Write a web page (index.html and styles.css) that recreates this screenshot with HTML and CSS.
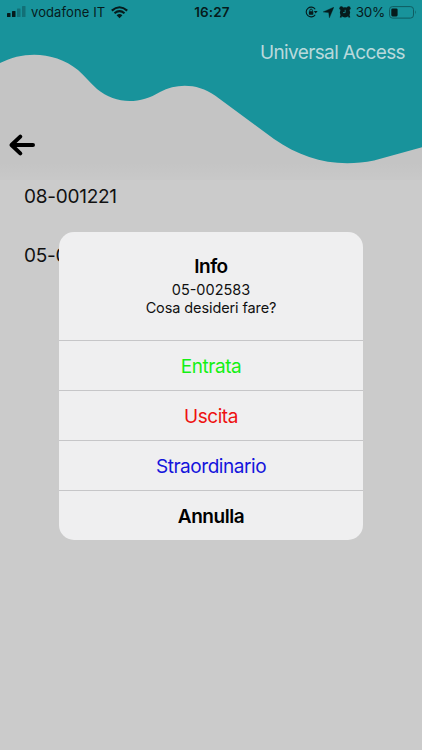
FILE: index.html
```html
<!DOCTYPE html>
<html lang="it">
<head>
  <meta charset="UTF-8">
  <meta name="viewport" content="width=device-width, initial-scale=1.0">
  <title>Universal Access</title>
  <link rel="stylesheet" href="styles.css">
</head>
<body>
  <header class="header">
    <svg class="wave" viewBox="0 0 422 180" aria-hidden="true">
      <path d="M0 0H422V147.300L374 160.500C337 168 304 160 274 139L215 95.500C198 83.500 177 83 160 92C139 105 115 104 97 89C90 83 85 76 78 70C56 52 25 50 0 63Z"/>
    </svg>

    <div class="status-bar">
      <div class="status-left">
        <svg class="signal" width="19" height="13" viewBox="0 0 19 13">
          <rect x="0" y="8" width="3.500" height="4" rx=".6"/>
          <rect x="5" y="6" width="3.500" height="6" rx=".6"/>
          <rect class="dim" x="10" y="3.500" width="3.500" height="8.500" rx=".6"/>
          <rect class="dim" x="15" y="1" width="3.500" height="11" rx=".6"/>
        </svg>
        <span class="carrier">vodafone IT</span>
        <svg class="wifi" width="17" height="13" viewBox="0 0 17 13">
          <path d="M.8 4.600Q8.500 -2.100 16.200 4.600M3.500 7.300Q8.500 3.100 13.500 7.300" fill="none" stroke="#061b1c" stroke-width="2.100"/>
          <path d="M5.600 9.200Q8.500 6.800 11.400 9.200L8.500 12.200Z"/>
        </svg>
      </div>
      <span class="clock">16:27</span>
      <div class="status-right">
        <svg width="13" height="12" viewBox="0 0 13 12">
          <path d="M10.200 3.300A4.900 4.900 0 1 0 10.200 8.700" fill="none" stroke="#061b1c" stroke-width="1.100"/>
          <path d="M8.800 5H12.600L10.700 7.600Z"/>
          <rect x="3.900" y="5.300" width="4.400" height="3.400" rx=".4"/>
          <path d="M4.800 5.500V4.400A1.300 1.300 0 0 1 7.400 4.400V5.500" fill="none" stroke="#061b1c" stroke-width=".9"/>
        </svg>
        <svg width="11" height="11" viewBox="0 0 11 11">
          <path d="M10.800 .2L6.400 10.800L5.700 5.500L.2 4.900Z" stroke="#061b1c" stroke-width=".4"/>
        </svg>
        <svg width="12" height="12" viewBox="0 0 12 12">
          <circle cx="6" cy="6.400" r="5.100"/>
          <circle cx="2.300" cy="2.200" r="1.900"/>
          <circle cx="9.700" cy="2.200" r="1.900"/>
          <path d="M2.500 9L1.500 11.500M9.500 9L10.500 11.500" stroke="#061b1c" stroke-width="1.700"/>
          <path d="M6.200 3.800V6.600H4" fill="none" stroke="#18939b" stroke-width=".8"/>
        </svg>
        <span class="percent">30%</span>
        <svg class="battery" width="28" height="13" viewBox="0 0 28 13">
          <rect x=".5" y=".6" width="24" height="11.500" rx="3" fill="none" stroke="#0f5c61"/>
          <rect x="2.300" y="2.400" width="6.300" height="8" rx="1.300"/>
          <path d="M26 4.300Q27.800 6.300 26 8.400Z" fill="#0f5c61"/>
        </svg>
      </div>
    </div>

    <h1 class="title">Universal Access</h1>

    <a class="back" href="#" aria-label="Indietro">
      <svg width="28" height="24" viewBox="0 0 28 24">
        <path d="M12.300 3.600L3.500 12L12.300 20.400M4 12H25" fill="none" stroke="#000" stroke-width="4" stroke-linecap="round" stroke-linejoin="round"/>
      </svg>
    </a>
  </header>

  <ul class="list">
    <li>08-001221</li>
    <li>05-002583</li>
  </ul>

  <div class="dialog" role="dialog" aria-labelledby="dialog-title">
    <div class="dialog-head">
      <h2 class="dialog-title" id="dialog-title">Info</h2>
      <p class="dialog-code">05-002583</p>
      <p class="dialog-text">Cosa desideri fare?</p>
    </div>
    <button class="action entrata">Entrata</button>
    <button class="action uscita">Uscita</button>
    <button class="action straordinario">Straordinario</button>
    <button class="action annulla">Annulla</button>
  </div>
</body>
</html>
```

FILE: styles.css
```css
* {
  box-sizing: border-box;
}
body {
  margin: 0;
  height: 750px;
  overflow: hidden;
  background: #cbcbcb;
  font-family: Inter, "Liberation Sans", sans-serif;
  color: #111;
}
svg {
  display: block;
  flex: none;
  fill: #061b1c;
}
.header {
  position: relative;
  height: 180px;
  background: linear-gradient(#c4c4c4 163px, #cbcbcb 190px);
}
.wave {
  position: absolute;
  top: 0;
  left: 0;
  width: 422px;
  height: 180px;
  fill: #18939b;
}
.status-bar {
  position: relative;
  display: grid;
  grid-template-columns: 1fr auto 1fr;
  align-items: center;
  height: 24px;
  padding: 0 5px 0 7px;
  color: #061b1c;
  font-size: 13px;
}
.status-left,
.status-right {
  display: flex;
  align-items: center;
}
.status-right {
  justify-content: flex-end;
  gap: 5px;
}
.signal {
  margin-top: -1px;
}
.dim {
  fill: #127077;
}
.carrier {
  margin: 0 6px 0 5px;
  letter-spacing: 0.1px;
}
.clock {
  font-size: 13.5px;
  font-weight: 600;
  letter-spacing: 0.15px;
}
.percent {
  font-size: 13.5px;
  letter-spacing: -0.3px;
  margin-right: -1px;
}
.title {
  position: relative;
  margin: 16px 17px 0 0;
  font-size: 19px;
  font-weight: 400;
  line-height: 25px;
  letter-spacing: -0.63px;
  text-align: right;
  color: #b9d9db;
}
.back {
  position: relative;
  display: block;
  width: 28px;
  margin: 68px 0 0 8px;
}
.list {
  margin: 0;
  padding: 4px 24px;
  list-style: none;
  font-size: 19px;
  letter-spacing: -0.25px;
}
.list li {
  height: 59px;
  line-height: 26px;
}
.dialog {
  position: absolute;
  top: 232px;
  left: 59px;
  width: 304px;
  height: 308px;
  border-radius: 15px;
  overflow: hidden;
  background: #efeff0;
  text-align: center;
}
.dialog-head {
  height: 108px;
  padding-top: 23px;
}
.dialog-title {
  margin: 0;
  font-size: 19px;
  font-weight: 600;
  line-height: 24px;
  letter-spacing: -0.5px;
  color: #000;
}
.dialog-code,
.dialog-text {
  margin: 0;
  font-size: 14.5px;
  line-height: 18px;
}
.dialog-code {
  margin-top: 2px;
}
.dialog-text {
  letter-spacing: -0.1px;
}
.action {
  display: block;
  width: 100%;
  height: 50px;
  padding: 1px 0 0;
  border: none;
  border-top: 1px solid #c6c6c8;
  background: none;
  font-family: inherit;
  font-size: 19px;
  letter-spacing: -0.45px;
}
.entrata {
  color: #14f014;
}
.uscita {
  color: #ee1111;
}
.straordinario {
  color: #1414dc;
}
.annulla {
  color: #000;
  font-weight: 600;
}
```
